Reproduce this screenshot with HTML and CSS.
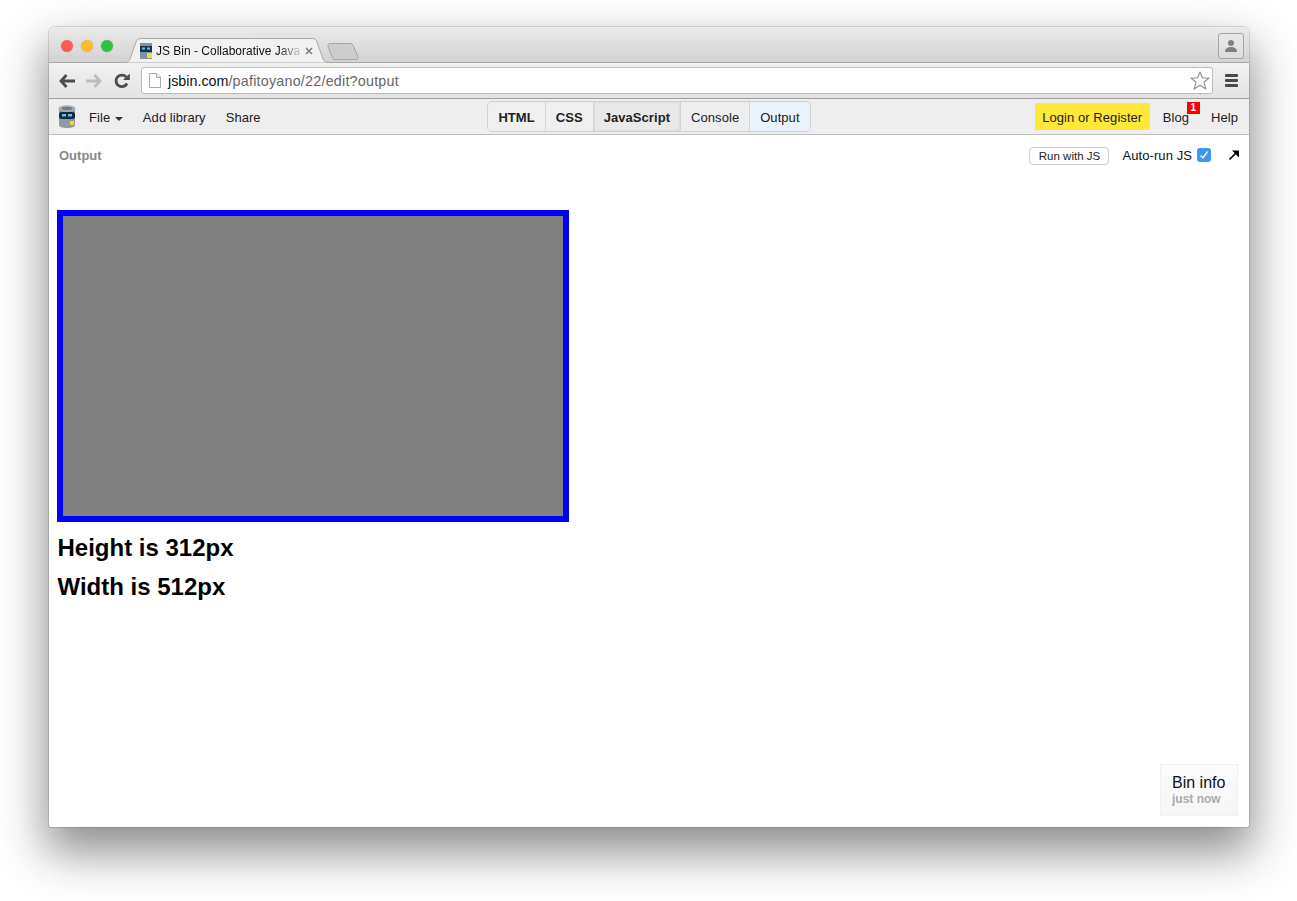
FILE: index.html
```html
<!DOCTYPE html>
<html lang="en">
<head>
<meta charset="utf-8">
<title>JS Bin</title>
<link rel="stylesheet" href="styles.css">
</head>
<body>
<div class="window">
  <header class="titlebar">
    <div class="lights"><i class="light red"></i><i class="light yellow"></i><i class="light green"></i></div>
    <div class="tab">
      <svg class="tab-shape" width="207" height="25" viewBox="0 0 207 25"><path d="M0 24.500H2C5 24.500 6 23 7 21L13 4C14 1.500 15 .5 18 .5H189C192 .5 193 1.500 194 4L200 21C201 23 202 24.500 205 24.500H207" fill="#f1f1f1" stroke="#a9a9a9"/></svg>
      <svg class="favicon" width="12" height="16" viewBox="0 0 12 16"><rect width="12" height="16" fill="#7f929f"/><rect x="0" y="3" width="12" height="6" fill="#1d3345"/><rect x="2" y="4.500" width="3" height="2" fill="#5fc4e8"/><rect x="7" y="4.500" width="3" height="2" fill="#5fc4e8"/><rect x="7" y="10" width="5" height="5" fill="#f5d94a"/></svg>
      <span class="tab-title">JS Bin - Collaborative Java</span>
      <svg class="tab-close" width="8" height="8" viewBox="0 0 8 8"><path d="M1 1L7 7M7 1L1 7" stroke="#808080" stroke-width="1.600"/></svg>
    </div>
    <svg class="newtab" width="32" height="18" viewBox="0 0 32 18"><path d="M1 2.500C1 1.200 1.700 .5 3 .5H23C24.500 .5 25.300 1 26 2.200L30.800 13.500C31.500 15.500 30.500 16.500 29 16.500H8C6.800 16.500 6 16 5.500 14.800L1.200 4Z" fill="#cdcdcd" stroke="#a5a5a5"/></svg>
    <div class="profile"><svg width="14" height="12" viewBox="0 0 14 12"><circle cx="7" cy="3" r="3" fill="#808080"/><path d="M1 12C1 8.500 3.500 7 7 7S13 8.500 13 12Z" fill="#808080"/></svg></div>
  </header>

  <div class="toolbar">
    <svg class="tool tool-back" width="16" height="14" viewBox="0 0 16 14"><path d="M7.500 1L2 7L7.500 13M2.500 7H16" fill="none" stroke="#4d4d4d" stroke-width="2.800"/></svg>
    <svg class="tool tool-fwd" width="16" height="14" viewBox="0 0 16 14"><path d="M8.500 1L14 7L8.500 13M13.500 7H0" fill="none" stroke="#bdbdbd" stroke-width="2.800"/></svg>
    <svg class="tool tool-reload" width="16" height="16" viewBox="0 0 16 16"><path d="M13 10.500A5.800 5.800 0 1 1 12.200 4" fill="none" stroke="#4d4d4d" stroke-width="2.800"/><path d="M9 7H15.800V.5Z" fill="#4d4d4d"/></svg>
    <div class="omnibox">
      <svg class="docicon" width="12" height="15" viewBox="0 0 12 15"><path d="M.5 .5H8L11.500 4V14.500H.5Z" fill="#fff" stroke="#aaa"/><path d="M7.500 .5V4.500H11.500" fill="#eee" stroke="#aaa"/></svg>
      <span class="url"><span class="url-host">jsbin.com</span>/pafitoyano/22/edit?output</span>
      <svg class="star" width="20" height="19" viewBox="0 0 20 19"><path d="M10 1L12.500 7H19L14 11.200L15.800 18L10 14.200L4.200 18L6 11.200L1 7H7.500Z" fill="#fff" stroke="#929292" stroke-width="1.200" stroke-linejoin="round"/></svg>
    </div>
    <div class="menu"><i></i><i></i><i></i></div>
  </div>

  <nav class="appbar">
    <div class="app-left">
      <svg class="logo" width="18" height="23" viewBox="0 0 18 23"><path d="M1 4H17V20C17 22 14 23 9 23S1 22 1 20Z" fill="#8e9ba3"/><ellipse cx="9" cy="3.500" rx="8.500" ry="3.200" fill="#a7b1b7"/><ellipse cx="9" cy="3.500" rx="5.500" ry="1.700" fill="#6f7c84"/><rect x="1" y="7" width="16" height="7" rx="2.500" fill="#15293a"/><rect x="4" y="9" width="4" height="2.500" fill="#5fc4e8"/><rect x="10" y="9" width="4" height="2.500" fill="#5fc4e8"/><rect x="12" y="16" width="4" height="4" fill="#f2d33f"/></svg>
      <a class="item">File <b class="caret"></b></a>
      <a class="item">Add library</a>
      <a class="item">Share</a>
    </div>
    <div class="panels">
      <a class="panel on">HTML</a>
      <a class="panel on">CSS</a>
      <a class="panel on js">JavaScript</a>
      <a class="panel">Console</a>
      <a class="panel output">Output</a>
    </div>
    <div class="app-right">
      <a class="login">Login or Register</a>
      <a class="item blog">Blog<span class="badge">1</span></a>
      <a class="item">Help</a>
    </div>
  </nav>

  <main class="content">
    <div class="output-head">
      <span class="output-label">Output</span>
      <span class="run">Run with JS</span>
      <span class="autorun">Auto-run JS</span>
      <span class="check"><svg width="14" height="14" viewBox="0 0 14 14"><path d="M3.500 7.500L6 10L10.500 3.500" fill="none" stroke="#fff" stroke-width="1.400"/></svg></span>
      <svg class="popout" width="12" height="12" viewBox="0 0 12 12"><path d="M1.500 10.500L9.500 2.500" stroke="#000" stroke-width="1.700"/><path d="M4 1.500H11V8.500Z" fill="#000"/></svg>
    </div>
    <div class="result">
      <div class="box"></div>
      <h2 class="size">Height is 312px</h2>
      <h2 class="size">Width is 512px</h2>
    </div>
    <div class="bininfo">
      <div class="bininfo-title">Bin info</div>
      <div class="bininfo-time">just now</div>
    </div>
  </main>
</div>
</body>
</html>
```
FILE: styles.css
```css
* { box-sizing: border-box; }
html, body { margin: 0; height: 100%; background: #fff; overflow: hidden; }
body { padding: 27px 48px 0 49px; font-family: "Liberation Sans", Arial, sans-serif; color: #111; }
a { display: block; }

.window {
  position: relative;
  width: 1200px;
  height: 800px;
  display: flex;
  flex-direction: column;
  border-radius: 5px 5px 2px 2px;
  background: #fff;
  box-shadow: 0 22px 46px 4px rgba(0,0,0,.44), 0 0 0 1px rgba(0,0,0,.12);
}

.titlebar {
  height: 36px;
  display: flex;
  align-items: flex-start;
  position: relative;
  background: linear-gradient(#ebebeb, #d2d2d2);
  border-bottom: 1px solid #a9a9a9;
  border-radius: 5px 5px 0 0;
}
.lights { display: flex; gap: 8px; padding: 13px 0 0 12px; width: 74px; flex: none; }
.light { width: 12px; height: 12px; border-radius: 50%; display: block; box-shadow: 0 0 0 .5px rgba(0,0,0,.1); }
.red { background: #fc5b57; }
.yellow { background: #febb2d; }
.green { background: #29c73f; }

.tab {
  position: relative;
  width: 207px;
  height: 25px;
  margin-top: 11px;
  display: flex;
  align-items: center;
  padding: 1px 0 0 17px;
  z-index: 1;
  flex: none;
}
.tab-shape { position: absolute; left: 0; top: 0; }
.favicon { position: relative; margin: 0 4px 0 0; flex: none; }
.tab-title {
  position: relative;
  width: 144px;
  white-space: nowrap;
  font-size: 12px;
  color: #111;
  -webkit-mask-image: linear-gradient(90deg, #000 122px, rgba(0,0,0,.15) 144px);
  mask-image: linear-gradient(90deg, #000 122px, rgba(0,0,0,.15) 144px);
}
.tab-close { position: relative; margin-left: 5px; flex: none; }
.newtab { margin: 16px 0 0 -3px; flex: none; }
.profile {
  margin: 6px 5px 0 auto;
  width: 26px;
  height: 26px;
  border: 1px solid #a5a5a5;
  border-radius: 3px;
  display: flex;
  align-items: center;
  justify-content: center;
  background: linear-gradient(#e9e9e9, #dcdcdc);
}

.toolbar {
  height: 36px;
  display: flex;
  align-items: center;
  background: linear-gradient(#f1f1f1, #e3e3e3);
  border-bottom: 1px solid #a0a0a0;
}
.tool { flex: none; }
.tool-back { margin-left: 10px; }
.tool-fwd { margin-left: 11px; }
.tool-reload { margin-left: 12px; }
.omnibox {
  margin-left: 11px;
  width: 1072px;
  height: 27px;
  display: flex;
  align-items: center;
  padding-left: 7px;
  background: #fff;
  border: 1px solid #bcbcbc;
  border-radius: 3px;
}
.docicon { flex: none; }
.url { margin-left: 7px; font-size: 14.3px; color: #666; white-space: nowrap; letter-spacing: .23px; }
.url-host { color: #111; letter-spacing: 0; }
.star { margin-left: auto; margin-right: 2px; }
.menu { margin-left: 12px; width: 13px; display: flex; flex-direction: column; gap: 2px; }
.menu i { display: block; height: 3px; background: #4a4a4a; border-radius: 1px; }

.appbar {
  height: 36px;
  display: grid;
  grid-template-columns: 1fr auto 1fr;
  background: #eee;
  border-bottom: 1px solid #bfbfbf;
  font-size: 13px;
  letter-spacing: .06px;
  color: #222;
}
.app-left { display: flex; align-items: center; padding-left: 9px; }
.logo { flex: none; margin-right: 13px; }
.item { white-space: nowrap; padding-top: 2px; }
.app-left .item + .item { margin-left: 20px; }
.caret {
  display: inline-block;
  vertical-align: middle;
  margin-left: 1px;
  border: 4px solid transparent;
  border-top-color: #333;
  border-bottom: 0;
}
.panels {
  display: flex;
  height: 31px;
  margin-top: 2px;
  border: 1px solid #d0d0d0;
  border-radius: 5px;
  overflow: hidden;
}
.panel {
  display: flex;
  align-items: center;
  padding: 2px 10px 0;
  border-left: 1px solid #d4d4d4;
  height: 100%;
}
.panel:first-child { border-left: 0; }
.on { font-weight: bold; background: #efefef; color: #222; }
.js { background: #e9e9e9; box-shadow: inset 0 0 2px rgba(0,0,0,.15); }
.output { background: #e9f2fd; }
.app-right { display: flex; align-items: center; justify-content: flex-end; padding-right: 11px; }
.login {
  height: 27px;
  margin-top: -1px;
  width: 115px;
  padding-top: 2px;
  display: flex;
  align-items: center;
  justify-content: center;
  background: #ffe838;
  color: #222;
  white-space: nowrap;
}
.blog { position: relative; margin-left: 13px; margin-right: 22px; }
.badge {
  position: absolute;
  left: 24px;
  top: -6px;
  width: 13px;
  height: 12px;
  background: #f00;
  color: #fff;
  font-size: 10px;
  font-weight: bold;
  line-height: 12px;
  text-align: center;
}

.content { position: relative; flex: 1; }
.output-head {
  height: 40px;
  display: flex;
  align-items: center;
  padding: 0 9px 0 10px;
}
.output-label { font-size: 13px; font-weight: bold; color: #888; margin-right: auto; }
.run {
  width: 80px;
  height: 18px;
  margin-top: 2px;
  border: 1px solid #ccc;
  border-radius: 4px;
  background: #fff;
  font-size: 11.5px;
  color: #222;
  text-align: center;
  line-height: 17px;
}
.autorun { margin-left: 13px; font-size: 13px; letter-spacing: .08px; color: #111; }
.check {
  margin-left: 5px;
  width: 14px;
  height: 14px;
  border-radius: 3px;
  background: #3e96f4;
  display: block;
}
.check svg { display: block; }
.popout { margin-left: 17px; flex: none; }

.result { padding: 35px 0 0 8px; }
.box { width: 512px; height: 312px; background: #808080; border: 6px solid #00f; }
.size { margin: 11px 0 0 .5px; font-size: 24px; line-height: 29px; font-weight: bold; color: #000; }
.size + .size { margin-top: 10px; }

.bininfo {
  position: absolute;
  right: 11px;
  bottom: 11px;
  width: 78px;
  height: 52px;
  padding: 9px 0 0 11px;
  border: 1px solid #f0f0f0;
  background: linear-gradient(#fcfcfc, #f5f5f5);
}
.bininfo-title { font-size: 16px; line-height: 18px; color: #111; }
.bininfo-time { margin-top: 1px; font-size: 12px; line-height: 13px; font-weight: bold; color: #aaa; }
```
